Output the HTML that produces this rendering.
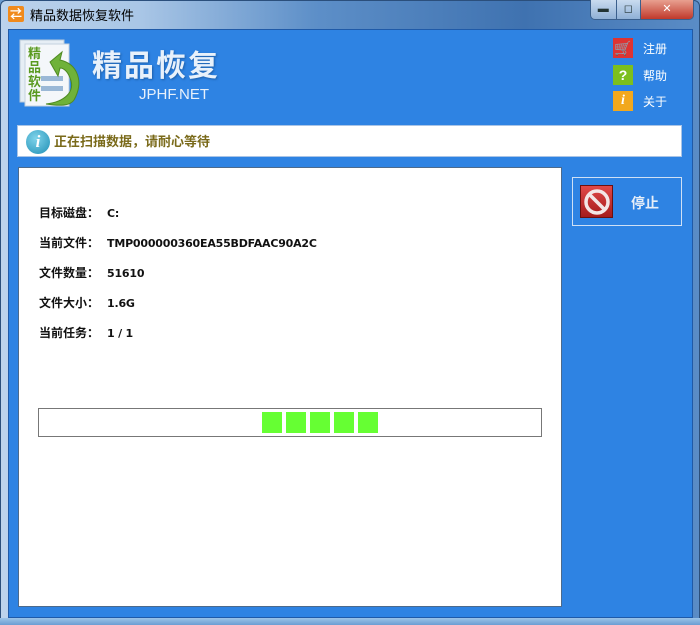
<!DOCTYPE html>
<html><head><meta charset="utf-8"><style>
*{margin:0;padding:0;box-sizing:border-box}
body{width:700px;height:625px;overflow:hidden;font-family:"Liberation Sans","Noto Sans CJK SC",sans-serif;background:#6a9bd0}
.frame{position:absolute;left:0;top:0;width:700px;height:625px;border-radius:6px 6px 0 0;background:linear-gradient(90deg,#bcd3ec 0%,#a9c6e6 20%,#5d8fc8 45%,#3f72b0 75%,#5a8cc6 100%);border:1px solid #2b4f7c}
.title{position:absolute;left:30px;top:5px;font-size:13px;color:#000}
.ticon{position:absolute;left:8px;top:6px;width:16px;height:16px;background:#f08a1c;border-radius:2px;color:#fff;font-size:12px;line-height:16px;text-align:center;font-weight:bold}
.btns{position:absolute;left:590px;top:0;width:104px;height:20px;border:1px solid #3a5f8c;border-top:none;border-radius:0 0 5px 5px;overflow:hidden;display:flex}
.btns div{height:19px;background:linear-gradient(#c9dbef,#8fb0d6);border-right:1px solid #3a5f8c;color:#233;font-size:11px;text-align:center;line-height:18px}
.client{position:absolute;left:8px;top:29px;width:685px;height:589px;background:#2e83e3;border:1px solid #1f5aa8}
.bottom{position:absolute;left:0;top:618px;width:700px;height:7px;background:linear-gradient(#9cc4e8,#6b9dd2)}
.logo{position:absolute;left:16px;top:38px}
.brand{position:absolute;left:92px;top:41px;font-size:30px;font-weight:bold;color:#e8f1fb;letter-spacing:2px;text-shadow:1px 1px 2px #1d5ea8}
.url{position:absolute;left:139px;top:86px;font-size:15px;color:#e8f1fb}
.menu{position:absolute;left:613px;font-size:12px;color:#fff}
.menu i{position:absolute;left:0;top:0;width:20px;height:20px;font-style:normal;text-align:center;line-height:20px;color:#fff;font-weight:bold;font-size:14px}
.menu span{position:absolute;left:30px;top:2px;white-space:nowrap}
.status{position:absolute;left:17px;top:125px;width:665px;height:32px;background:#fff;border:1px solid #a9c4e6}
.status .ic{position:absolute;left:8px;top:4px;width:24px;height:24px;border-radius:50%;background:radial-gradient(circle at 40% 35%,#7fd3ea,#1f8fb5);color:#fff;font:italic bold 17px "Liberation Serif",serif;text-align:center;line-height:24px}
.status .t{position:absolute;left:36px;top:5px;font-size:13px;font-weight:bold;color:#7a6a1a}
.panel{position:absolute;left:18px;top:167px;width:544px;height:440px;background:#fff;border:1px solid #4c6a8c}
.row{position:absolute;left:20px;font-size:12px;font-weight:bold;color:#111;white-space:nowrap}
.row b{font-family:"DejaVu Sans",sans-serif;font-size:11px;margin-left:8px;letter-spacing:-0.2px}
.prog{position:absolute;left:19px;top:240px;width:504px;height:29px;border:1px solid #777}
.prog div{position:absolute;top:3px;width:20px;height:21px;background:#66ff33}
.stop{position:absolute;left:572px;top:177px;width:110px;height:49px;border:1px solid #cfe0f5}
.stop .ic{position:absolute;left:7px;top:7px;width:33px;height:33px;background:linear-gradient(#e04848,#a51c1c);border:1px solid #6b1010}
.stop span{position:absolute;left:58px;top:15px;font-size:14px;font-weight:bold;color:#e6eef8}
</style></head><body>
<div class="frame"></div>
<div class="ticon">⇄</div>
<div class="title">精品数据恢复软件</div>
<div class="btns"><div style="width:26px">▬</div><div style="width:25px">◻</div><div style="width:53px;background:linear-gradient(#e8a090,#c0392b);color:#fff;border:none">✕</div></div>
<div class="client"></div>
<div class="bottom"></div>
<svg class="logo" width="70" height="70" viewBox="0 0 70 70">
<rect x="4" y="2" width="44" height="62" fill="#e6eef5" stroke="#b9c9d8"/>
<rect x="9" y="6" width="44" height="62" fill="#f4f7fa" stroke="#c4d2de"/>
<rect x="25" y="38" width="22" height="5" fill="#9ab8d6"/><rect x="25" y="48" width="22" height="5" fill="#9ab8d6"/>
<path d="M34 24 L46 14 L44 22 C62 26 68 44 58 62 C54 68 44 68 30 66 C48 64 60 54 54 40 C52 34 48 30 44 30 L42 38 Z" fill="#6fb23a" stroke="#4f8a22"/>
<text x="12" y="20" font-size="13" font-weight="bold" fill="#5a9a20" font-family="Noto Sans CJK SC">精</text>
<text x="12" y="34" font-size="13" font-weight="bold" fill="#5a9a20" font-family="Noto Sans CJK SC">品</text>
<text x="12" y="48" font-size="13" font-weight="bold" fill="#5a9a20" font-family="Noto Sans CJK SC">软</text>
<text x="12" y="62" font-size="13" font-weight="bold" fill="#5a9a20" font-family="Noto Sans CJK SC">件</text>
</svg>
<div class="brand">精品恢复</div>
<div class="url">JPHF.NET</div>
<div class="menu" style="top:38px"><i style="background:#d33">🛒</i><span>注册</span></div>
<div class="menu" style="top:65px"><i style="background:#7cbf1e">?</i><span>帮助</span></div>
<div class="menu" style="top:91px"><i style="background:#f2a81d;font-style:italic;font-family:'Liberation Serif'">i</i><span>关于</span></div>
<div class="status"><div class="ic">i</div><div class="t">正在扫描数据，请耐心等待</div></div>
<div class="panel">
<div class="row" style="top:36px">目标磁盘：<b>C:</b></div>
<div class="row" style="top:66px">当前文件：<b>TMP000000360EA55BDFAAC90A2C</b></div>
<div class="row" style="top:96px">文件数量：<b>51610</b></div>
<div class="row" style="top:126px">文件大小：<b>1.6G</b></div>
<div class="row" style="top:156px">当前任务：<b>1 / 1</b></div>
<div class="prog"><div style="left:223px"></div><div style="left:247px"></div><div style="left:271px"></div><div style="left:295px"></div><div style="left:319px"></div></div>
</div>
<div class="stop"><div class="ic"><svg width="33" height="33"><circle cx="16" cy="16" r="11" fill="none" stroke="#f3e6e6" stroke-width="3.5"/><line x1="8" y1="8" x2="24" y2="24" stroke="#f3e6e6" stroke-width="3.5"/></svg></div><span>停止</span></div>
</body></html>
